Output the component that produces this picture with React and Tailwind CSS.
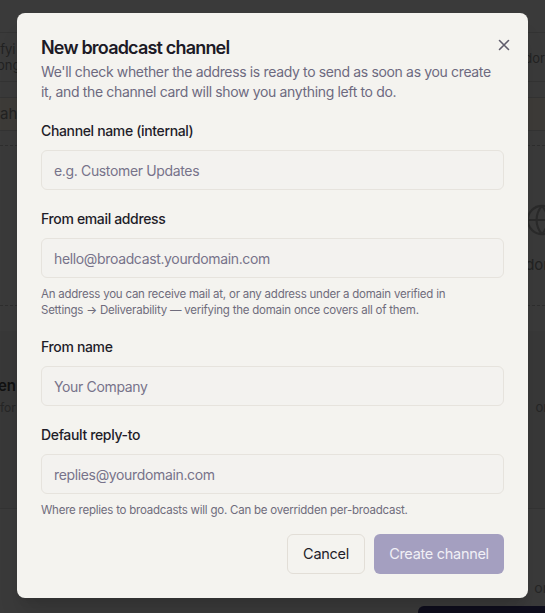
import React from "react";

const font = { fontFamily: "Inter, 'Noto Sans', sans-serif" };

function Field({ label, placeholder, hint, autoFocus }) {
  return (
    <div className="flex flex-col">
      <label className="text-[14px] leading-5 font-medium text-[#1f1d29] tracking-[-0.025em] mb-[9px]">{label}</label>
      <input
        autoFocus={autoFocus}
        placeholder={placeholder}
        className="h-10 w-full rounded-md border border-[#e6e3dd] bg-[#f3f2ef] px-3 text-[14px] text-[#1f1d29] placeholder:text-[#77738a] tracking-[-0.025em] outline-none caret-[#1f1d29]"
      />
      {hint && <p className="mt-2 max-w-[420px] text-[11.5px] leading-4 text-[#6f6c7c] tracking-[-0.02em]">{hint}</p>}
    </div>
  );
}

function Backdrop() {
  return (
    <div className="flex h-full flex-col bg-[#3a3a3a] text-[#1b1b1b] text-[14px]">
      <div className="h-[33px] border-b border-[#333]" />
      <div className="flex h-[49px] items-center justify-between border-b border-[#333] text-[13px] leading-4">
        <div className="-ml-[3px] text-[#222]">ifyi<br />ong</div>
        <div className="mt-[17px] self-start text-[#222]">dor</div>
      </div>
      <div className="h-[15px]" />
      <div className="flex h-[34px] items-center border-y border-[#333] bg-[#3d3b38] text-[15px] text-[#222]">ah.</div>
      <div className="h-[15px] border-b border-dashed border-[#2e2e2e]" />
      <div className="relative h-[160px] border-b border-dashed border-[#2e2e2e]">
        <svg className="absolute right-[-14px] top-[57px]" width="34" height="34" viewBox="0 0 24 24" fill="none" stroke="#2a2a2a" strokeWidth="1.5">
          <circle cx="12" cy="12" r="10" />
          <path d="M2 12h20M12 2a15 15 0 0 1 0 20M12 2a15 15 0 0 0 0 20" />
        </svg>
        <span className="absolute right-[-4px] top-[108px] text-[15px] text-[#222]">dor</span>
      </div>
      <div className="h-[25px]" />
      <div className="relative h-[178px] border-b border-[#333] bg-[#383838]">
        <span className="absolute -left-[2px] top-[44px] text-[15px] font-semibold text-[#111]">en</span>
        <span className="absolute left-0 top-[68px] text-[12px] text-[#262626]">for</span>
        <span className="absolute right-[-6px] top-[67px] text-[13px] text-[#262626]">on</span>
      </div>
      <div className="relative flex-1">
        <span className="absolute right-[-6px] top-[68px] text-[14px] text-[#262626]">on</span>
        <div className="absolute left-[418px] top-[97px] h-10 w-[160px] rounded-md bg-[#0e0d1c]" />
      </div>
    </div>
  );
}

export default function App() {
  return (
    <div className="relative h-[613px] w-[545px] overflow-hidden" style={font}>
      <Backdrop />
      <div className="absolute left-[17px] top-[13px] w-[511px] rounded-lg bg-[#f4f3ef] px-6 pt-[23px] pb-6 shadow-xl">
        <button className="absolute right-[17px] top-[25px] text-[#5f5c6b]">
          <svg width="14" height="14" viewBox="0 0 14 14" fill="none" stroke="currentColor" strokeWidth="1.6" strokeLinecap="round">
            <path d="M2.5 2.5l9 9M11.5 2.5l-9 9" />
          </svg>
        </button>
        <h2 className="text-[18px] leading-6 font-semibold tracking-[-0.045em] text-[#1c1a26]">New broadcast channel</h2>
        <p className="mt-[2px] text-[14px] leading-5 text-[#6d6a7f] tracking-[-0.025em]">
          We'll check whether the address is ready to send as soon as you create it, and the channel card will show you anything left to do.
        </p>
        <div className="mt-[19px] flex flex-col gap-[19px]">
          <Field label="Channel name (internal)" placeholder="e.g. Customer Updates" autoFocus />
          <Field
            label="From email address"
            placeholder="hello@broadcast.yourdomain.com"
            hint="An address you can receive mail at, or any address under a domain verified in Settings → Deliverability — verifying the domain once covers all of them."
          />
          <Field label="From name" placeholder="Your Company" />
          <Field
            label="Default reply-to"
            placeholder="replies@yourdomain.com"
            hint="Where replies to broadcasts will go. Can be overridden per-broadcast."
          />
        </div>
        <div className="mt-4 flex justify-end gap-[9px]">
          <button className="h-10 w-[78px] rounded-md border border-[#e2ded7] bg-[#f4f3ef] text-[14.5px] tracking-[-0.02em] text-[#1f1d29]">Cancel</button>
          <button className="h-10 w-[130px] rounded-md bg-[#a49fc0] text-[14.5px] tracking-[-0.02em] text-[#f1f0f6]">Create channel</button>
        </div>
      </div>
    </div>
  );
}
